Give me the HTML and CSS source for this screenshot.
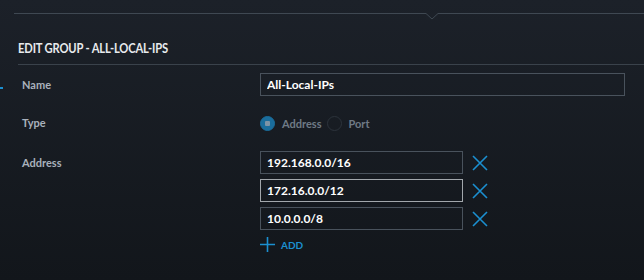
FILE: index.html
```html
<!DOCTYPE html>
<html>
<head>
	<title>Edit Group</title>
	<meta name="viewport" content="width=device-width, initial-scale=1.0">
	<link rel="stylesheet" href="styles.css">
</head>
<body>
	<div class="side-mark"></div>
	<div class="panel">
		<div class="topline">
			<svg class="notch" width="12" height="7" viewBox="0 0 12 7">
				<path d="M0 0.5 L6 6 L12 0.5" fill="none" stroke="#3f4852" stroke-width="1"/>
			</svg>
		</div>
		<h1 class="title">EDIT GROUP - ALL-LOCAL-IPS</h1>
		<div class="divider"></div>

		<div class="form">
			<div class="row row-name">
				<label class="label">Name</label>
				<div class="field">
					<input class="text wide" type="text" value="All-Local-IPs">
				</div>
			</div>

			<div class="row row-type">
				<label class="label">Type</label>
				<div class="field radios">
					<span class="radio on"></span><span class="radio-text">Address</span>
					<span class="radio"></span><span class="radio-text">Port</span>
				</div>
			</div>

			<div class="row row-address">
				<label class="label">Address</label>
				<div class="field list">
					<div class="entry">
						<input class="text short" type="text" value="192.168.0.0/16">
						<svg class="remove" width="16" height="16" viewBox="0 0 16 16"><path d="M1 1 L15 15 M15 1 L1 15" stroke="#1b8fd0" stroke-width="1.6"/></svg>
					</div>
					<div class="entry">
						<input class="text short focus" type="text" value="172.16.0.0/12">
						<svg class="remove" width="16" height="16" viewBox="0 0 16 16"><path d="M1 1 L15 15 M15 1 L1 15" stroke="#1b8fd0" stroke-width="1.6"/></svg>
					</div>
					<div class="entry">
						<input class="text short" type="text" value="10.0.0.0/8">
						<svg class="remove" width="16" height="16" viewBox="0 0 16 16"><path d="M1 1 L15 15 M15 1 L1 15" stroke="#1b8fd0" stroke-width="1.6"/></svg>
					</div>
					<div class="add">
						<svg width="15" height="15" viewBox="0 0 15 15"><path d="M7.5 0 V15 M0 7.5 H15" stroke="#1b8fd0" stroke-width="1.6"/></svg>
						<span>ADD</span>
					</div>
				</div>
			</div>
		</div>
	</div>
</body>
</html>
```

FILE: styles.css
```css
* {
	padding: 0px;
	margin: 0px;
	box-sizing: border-box;
}
body {
	width: 644px;
	height: 280px;
	overflow: hidden;
	background: linear-gradient(#1c2129, #12161b);
	font-family: Lato, "Open Sans", sans-serif;
	position: relative;
}
.side-mark {
	position: absolute;
	left: 0px;
	top: 87px;
	width: 3px;
	height: 2px;
	background-color: #1b8fd0;
}
.panel {
	padding-top: 13px;
	padding-left: 14px;
}
.topline {
	position: relative;
	height: 1px;
	background-color: #3f4852;
}
.notch {
	position: absolute;
	left: 412px;
	top: 0px;
	background-color: #1c2129;
}
.title {
	width: max-content;
	margin-top: 27px;
	margin-left: 4px;
	font-size: 14px;
	font-weight: bold;
	color: #e8ebee;
	letter-spacing: -0.2px;
	line-height: 14px;
	transform: scaleX(0.8);
	transform-origin: left center;
}
.divider {
	margin-top: 9px;
	margin-left: 4px;
	height: 1px;
	background-color: #3a424b;
}
.form {
	padding-left: 8px;
	padding-top: 8px;
}
.row {
	display: grid;
	grid-template-columns: 238px 1fr;
	align-items: start;
}
.label {
	font-size: 11px;
	font-weight: bold;
	color: #a9b1bc;
	line-height: 24px;
}
.text {
	display: block;
	height: 23px;
	background: transparent;
	border: 1px solid #49525c;
	color: #ffffff;
	font-family: Lato, "Open Sans", sans-serif;
	font-size: 12px;
	font-weight: bold;
	padding-left: 6px;
	outline: none;
}
.wide {
	width: 365px;
}
.short {
	width: 203px;
}
.focus {
	border-color: #a2a7ac;
}
.row-type {
	margin-top: 14px;
}
.radios {
	display: flex;
	align-items: center;
	height: 24px;
}
.radio {
	width: 15px;
	height: 15px;
	border-radius: 50%;
	border: 1px solid #2c333b;
	position: relative;
}
.radio.on {
	background-color: #1a6d9c;
	border-color: #1a6d9c;
}
.radio.on::after {
	content: "";
	position: absolute;
	left: 4px;
	top: 4px;
	width: 5px;
	height: 5px;
	border-radius: 1px;
	background-color: #7d94a6;
}
.radio-text {
	font-size: 11px;
	font-weight: bold;
	color: #6f7a86;
	margin-left: 7px;
	margin-right: 5px;
}
.row-address {
	margin-top: 16px;
}
.list {
	display: flex;
	flex-direction: column;
	gap: 5px;
}
.entry {
	display: flex;
	align-items: center;
	gap: 9px;
}
.add {
	display: flex;
	align-items: center;
	gap: 6px;
	margin-top: 2px;
	color: #1b8fd0;
	font-size: 10px;
	font-weight: bold;
}
```
